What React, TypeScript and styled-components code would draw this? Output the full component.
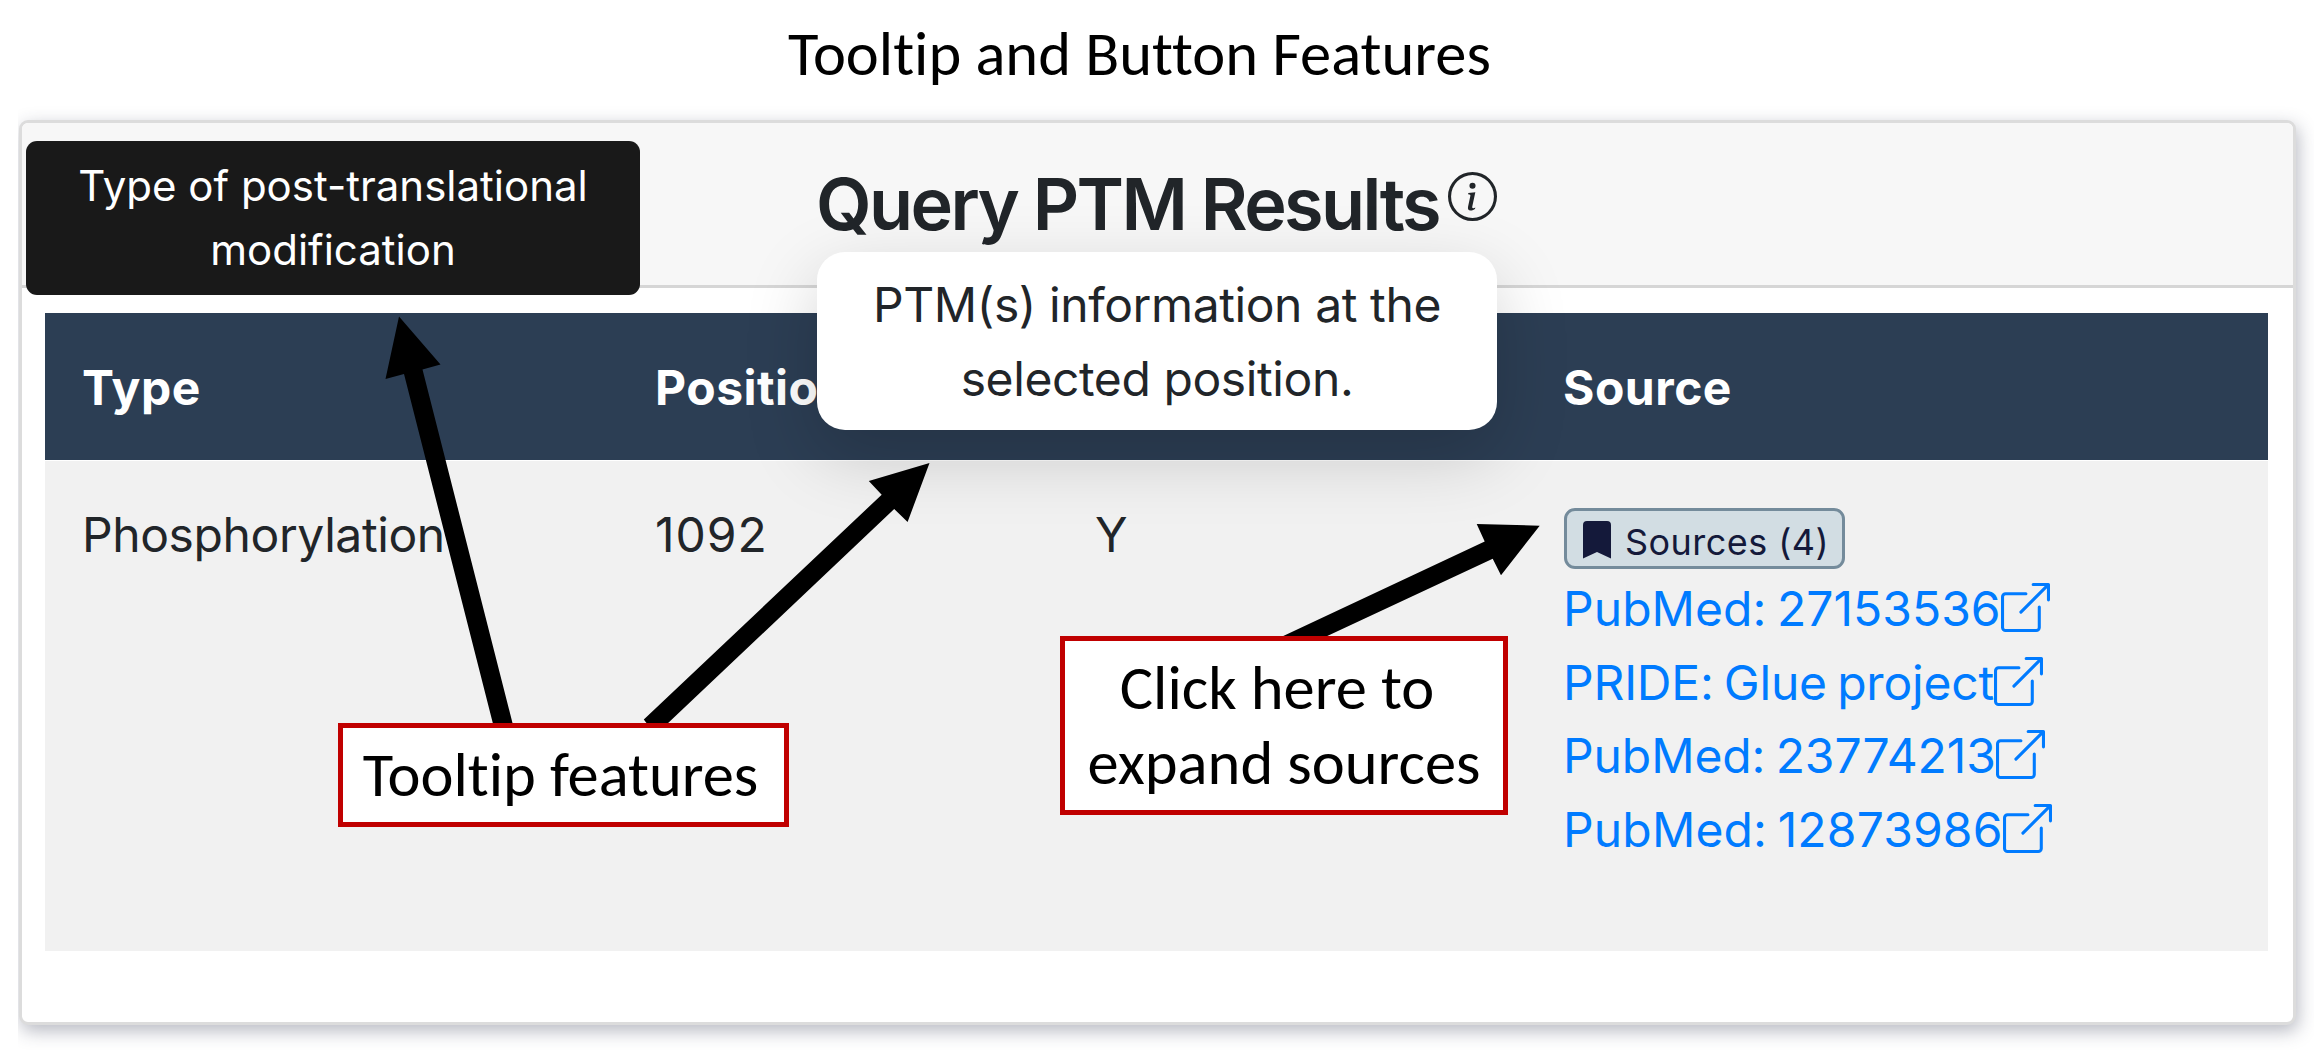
import React from 'react';
import styled, { createGlobalStyle } from 'styled-components';

const Global = createGlobalStyle`
  *, *::before, *::after { box-sizing: border-box; }
  body { margin: 0; background: #fff; }
`;

const Figure = styled.main`
  position: relative;
  width: 2314px;
  height: 1050px;
  overflow: hidden;
  padding: 0 18px 0 19px;
  background: #fff;
  color: #212529;
  font-family: Inter, "Liberation Sans", sans-serif;
  font-weight: 430;
`;

const FigureTitle = styled.h1`
  margin: 0;
  height: 120px;
  padding: 16px 0 0 769px;
  color: #000;
  font: 400 62.5px/76px Carlito, Calibri, Lato, sans-serif;
  font-variant-ligatures: none;
  white-space: nowrap;
`;

const Card = styled.section`
  display: flex;
  flex-direction: column;
  height: 905px;
  border: 3px solid #dcdcdc;
  border-radius: 9px;
  background: #fff;
  box-shadow: 2px 6px 18px rgba(45, 50, 75, 0.34);
  clip-path: inset(-40px -40px -40px -1px);
`;

const CardHeader = styled.header`
  display: flex;
  align-items: flex-start;
  height: 165px;
  padding: 38px 0 0 794px;
  border-bottom: 3px solid #d6d6d6;
  border-radius: 6px 6px 0 0;
  background: #f7f7f7;
`;

const Heading = styled.h2`
  margin: 0 9px 0 0;
  font-size: 72px;
  line-height: 86px;
  font-weight: 600;
  letter-spacing: -2.63px;
  white-space: nowrap;
`;

const InfoSvg = styled.svg`
  width: 49px;
  height: 49px;
  margin-top: 11px;
  fill: currentColor;
`;

const Table = styled.div`
  margin: 25px 25px 0 23px;
`;

const Row = styled.div`
  display: grid;
  grid-template-columns: 573px 440px 468px 1fr;
`;

const HeadRow = styled(Row)`
  height: 147px;
  background: #2c3e54;
  color: #fff;
`;

const BodyRow = styled(Row)`
  height: 490px;
  margin-top: 1px;
  background: #f1f1f1;
`;

const Cell = styled.div<{ $spacing?: number }>`
  padding: 38px 0 0 37px;
  font-size: 48px;
  line-height: 72px;
  letter-spacing: ${p => p.$spacing ?? 0}px;
  white-space: nowrap;
`;

const HeadCell = styled(Cell)`
  padding-top: 39px;
  font-weight: 700;
`;

const SourceCell = styled(Cell)`
  display: flex;
  flex-direction: column;
  align-items: flex-start;
  padding: 47px 0 0 38px;
`;

const SourcesButton = styled.button`
  display: flex;
  align-items: center;
  gap: 14px;
  width: 281px;
  height: 61px;
  margin: 0 0 3px;
  padding: 6px 0 0 16px;
  border: 3px solid #748b9b;
  border-radius: 11px;
  background: #d2dde3;
  color: #14193a;
  font: 430 36px/44px Inter, "Liberation Sans", sans-serif;
  letter-spacing: 0.45px;
`;

const BookmarkSvg = styled.svg`
  width: 28px;
  height: 38px;
  margin-top: -4px;
  fill: currentColor;
`;

const SourceLink = styled.a<{ $spacing: number }>`
  display: flex;
  align-items: flex-start;
  height: 73.7px;
  margin-left: -1px;
  color: #007bff;
  line-height: 73.7px;
  letter-spacing: ${p => p.$spacing}px;
  word-spacing: -3px;
  text-decoration: none;
`;

const LinkSvg = styled.svg`
  width: 49px;
  height: 49px;
  margin-top: 11px;
  fill: currentColor;
`;

const Tooltip = styled.div`
  position: absolute;
  text-align: center;
  white-space: nowrap;
`;

const DarkTooltip = styled(Tooltip)`
  left: 26px;
  top: 141px;
  width: 614px;
  height: 153.5px;
  padding-top: 13px;
  border-radius: 11px;
  background: #191919;
  color: #fff;
  font-size: 42px;
  line-height: 64px;
`;

const LightTooltip = styled(Tooltip)`
  left: 817px;
  top: 252px;
  width: 680px;
  height: 178px;
  padding-top: 16px;
  border-radius: 28px;
  background: #fff;
  box-shadow: 0 24px 72px rgba(0, 0, 0, 0.18);
  font-size: 48px;
  line-height: 73.5px;
  letter-spacing: -0.4px;
`;

const Arrows = styled.svg`
  position: absolute;
  inset: 0;
  width: 2314px;
  height: 1050px;
  fill: #000;
  pointer-events: none;
`;

const Callout = styled.div<{ $x: number; $y: number; $w: number; $h: number }>`
  position: absolute;
  left: ${p => p.$x}px;
  top: ${p => p.$y}px;
  width: ${p => p.$w}px;
  height: ${p => p.$h}px;
  padding-top: 9px;
  border: 5px solid #c00000;
  background: #fff;
  color: #000;
  font: 400 62.5px/75px Carlito, Calibri, Lato, sans-serif;
  font-variant-ligatures: none;
  text-align: center;
  white-space: nowrap;
`;

const CalloutLine = styled.div<{ $indentEnd?: number }>`
  padding-right: ${p => p.$indentEnd ?? 0}px;
`;

const sources = [
  { label: 'PubMed: 27153536', spacing: 0.05 },
  { label: 'PRIDE: Glue project', spacing: -0.2 },
  { label: 'PubMed: 23774213', spacing: -0.1 },
  { label: 'PubMed: 12873986', spacing: 0.15 },
];

const InfoIcon = () => (
  <InfoSvg viewBox="0 0 16 16">
    <path d="M8 15A7 7 0 1 1 8 1a7 7 0 0 1 0 14zm0 1A8 8 0 1 0 8 0a8 8 0 0 0 0 16z" />
    <path d="m8.93 6.588-2.29.287-.082.38.45.083c.294.07.352.176.288.469l-.738 3.468c-.194.897.105 1.319.808 1.319.545 0 1.178-.252 1.465-.598l.088-.416c-.2.176-.492.246-.686.246-.275 0-.375-.193-.304-.533L8.93 6.588zM9 4.5a1 1 0 1 1-2 0 1 1 0 0 1 2 0z" />
  </InfoSvg>
);

const ExternalIcon = () => (
  <LinkSvg viewBox="0 0 16 16">
    <path d="M8.636 3.5a.5.5 0 0 0-.5-.5H1.5A1.5 1.5 0 0 0 0 4.5v10A1.5 1.5 0 0 0 1.5 16h10a1.5 1.5 0 0 0 1.5-1.5V7.864a.5.5 0 0 0-1 0V14.5a.5.5 0 0 1-.5.5h-10a.5.5 0 0 1-.5-.5v-10a.5.5 0 0 1 .5-.5h6.636a.5.5 0 0 0 .5-.5z" />
    <path d="M16 .5a.5.5 0 0 0-.5-.5h-5a.5.5 0 0 0 0 1h3.793L6.146 9.146a.5.5 0 1 0 .708.708L15 1.707V5.5a.5.5 0 0 0 1 0v-5z" />
  </LinkSvg>
);

export default function App() {
  return (
    <Figure>
      <Global />
      <FigureTitle>Tooltip and Button Features</FigureTitle>
      <Card>
        <CardHeader>
          <Heading>Query PTM Results</Heading>
          <InfoIcon />
        </CardHeader>
        <Table>
          <HeadRow>
            <HeadCell $spacing={0.5}>Type</HeadCell>
            <HeadCell $spacing={0.5}>Position</HeadCell>
            <HeadCell />
            <HeadCell $spacing={0.5}>Source</HeadCell>
          </HeadRow>
          <BodyRow>
            <Cell $spacing={-0.4}>Phosphorylation</Cell>
            <Cell $spacing={1}>1092</Cell>
            <Cell>Y</Cell>
            <SourceCell>
              <SourcesButton>
                <BookmarkSvg viewBox="0 0 28 38">
                  <path d="M4 0h20a4 4 0 0 1 4 4v33.5l-14-6.500-14 6.500V4a4 4 0 0 1 4-4z" />
                </BookmarkSvg>
                Sources (4)
              </SourcesButton>
              {sources.map(s => (
                <SourceLink key={s.label} $spacing={s.spacing}>
                  {s.label}
                  <ExternalIcon />
                </SourceLink>
              ))}
            </SourceCell>
          </BodyRow>
        </Table>
      </Card>
      <DarkTooltip>
        Type of post-translational
        <br />
        modification
      </DarkTooltip>
      <LightTooltip>
        PTM(s) information at the
        <br />
        selected position.
      </LightTooltip>
      <Arrows viewBox="0 0 2314 1050">
        <polygon points="399,316.5 440.5,364.5 422.5,369.5 513,725 493.3,725 404,374 385.5,379" />
        <polygon points="929.5,463 907.6,522 894.2,509 666,725 648,725 643.8,719.5 881.7,494.7 868.8,481" />
        <polygon points="1539.7,525.7 1501,575.3 1492.7,558.7 1323,638 1279,638 1484.7,541.5 1476.7,524" />
      </Arrows>
      <Callout $x={338} $y={723} $w={451} $h={104}>
        <CalloutLine $indentEnd={6}>Tooltip features</CalloutLine>
      </Callout>
      <Callout $x={1060} $y={636} $w={448} $h={179}>
        <CalloutLine $indentEnd={14}>Click here to</CalloutLine>
        <CalloutLine>expand sources</CalloutLine>
      </Callout>
    </Figure>
  );
}
